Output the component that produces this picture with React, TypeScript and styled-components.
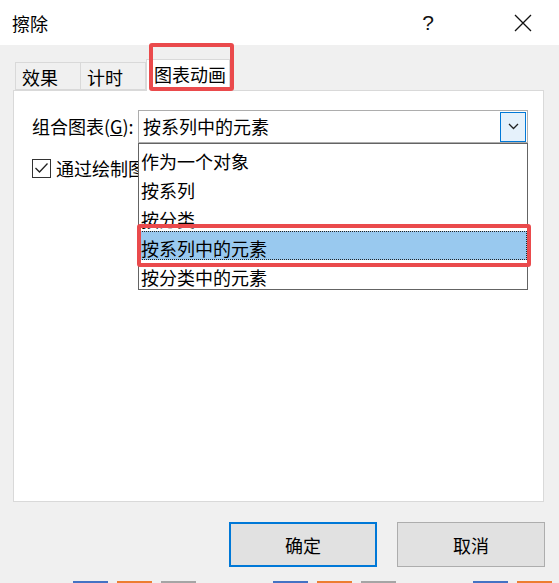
import React from "react"
import styled, { createGlobalStyle } from "styled-components"

const GlobalStyle = createGlobalStyle`
  html, body {
    margin: 0;
    padding: 0;
    background: #f0f0f0;
  }
  body {
    font-family: "Noto Sans CJK SC", "Noto Sans", sans-serif;
    color: #000;
  }
  * {
    box-sizing: border-box;
  }
`

const Window = styled.div`
  width: 559px;
  height: 583px;
  display: flex;
  flex-direction: column;
  background: #f0f0f0;
  overflow: hidden;
`

const TitleBar = styled.div`
  height: 45px;
  flex: none;
  display: flex;
  align-items: center;
  background: #fff;
  padding-left: 12px;
`

const Title = styled.div`
  font-size: 18px;
  line-height: 24px;
  flex: 1;
`

const TitleButton = styled.div<{ $w: number }>`
  width: ${(p) => p.$w}px;
  height: 45px;
  display: flex;
  align-items: center;
  justify-content: center;
  font-size: 20px;
  color: #111;
`

const HelpButton = styled(TitleButton)`
  margin-right: 34px;
  font-family: "Liberation Sans", sans-serif;
  font-size: 21px;
`

const CloseButton = styled(TitleButton)`
  margin-right: 3px;
`

const Body = styled.div`
  padding: 14px 0 0 13px;
  display: flex;
  flex-direction: column;
`

const TabRow = styled.div`
  display: flex;
  align-items: flex-end;
  height: 31px;
  padding-left: 2px;
`

const Tab = styled.div<{ $active?: boolean; $first?: boolean; $w: number }>`
  position: relative;
  width: ${(p) => p.$w}px;
  height: ${(p) => (p.$active ? 32 : 28)}px;
  margin-bottom: ${(p) => (p.$active ? -1 : 0)}px;
  padding-left: ${(p) => (p.$active ? 7 : 6)}px;
  font-size: 18px;
  line-height: 28px;
  background: ${(p) => (p.$active ? "#fff" : "#f0f0f0")};
  border: 1px solid #d9d9d9;
  border-bottom: ${(p) => (p.$active ? "none" : "1px solid #d9d9d9")};
  border-left: ${(p) => (p.$first || p.$active ? "1px solid #d9d9d9" : "none")};
  z-index: ${(p) => (p.$active ? 2 : 1)};
`

const Highlight = styled.div<{ $l: number; $t: number; $w: number; $h: number }>`
  position: absolute;
  left: ${(p) => p.$l}px;
  top: ${(p) => p.$t}px;
  width: ${(p) => p.$w}px;
  height: ${(p) => p.$h}px;
  border: 4px solid #ea4a4c;
  border-radius: 3px;
  pointer-events: none;
  z-index: 5;
`

const Panel = styled.div`
  width: 531px;
  height: 412px;
  background: #fff;
  border: 1px solid #d9d9d9;
  padding: 19px 0 0 18px;
  display: flex;
  flex-direction: column;
`

const FieldRow = styled.div`
  display: flex;
  align-items: center;
`

const Label = styled.div`
  width: 106px;
  font-size: 18px;
  line-height: 33px;
`

const Combo = styled.div`
  position: relative;
  width: 390px;
  height: 33px;
  border: 1px solid #adadad;
  background: #fff;
  display: flex;
  align-items: center;
  padding-left: 4px;
`

const ComboText = styled.div`
  flex: 1;
  font-size: 18px;
  line-height: 31px;
`

const DropButton = styled.div`
  width: 26px;
  height: 30px;
  margin-right: 1px;
  border: 1px solid #0078d7;
  background: #e5f1fb;
  display: flex;
  align-items: center;
  justify-content: center;
`

const List = styled.div`
  position: absolute;
  left: -1px;
  top: 32px;
  width: 390px;
  border: 1px solid #646464;
  background: #fff;
  z-index: 3;
`

const Item = styled.div<{ $selected?: boolean }>`
  position: relative;
  height: 29px;
  padding: 5px 0 0 2px;
  font-size: 18px;
  line-height: 24px;
  white-space: nowrap;
  background: ${(p) => (p.$selected ? "#99c9ef" : "#fff")};
  outline: ${(p) => (p.$selected ? "1px dotted #222" : "none")};
  outline-offset: -1px;
`

const CheckRow = styled.div`
  display: flex;
  align-items: center;
  margin-top: 14px;
  gap: 5px;
`

const Box = styled.div`
  width: 19px;
  height: 19px;
  border: 1px solid #333;
  display: flex;
  align-items: center;
  justify-content: center;
  background: #fff;
`

const CheckText = styled.div`
  font-size: 18px;
  line-height: 22px;
  white-space: nowrap;
`

const Footer = styled.div`
  display: flex;
  justify-content: flex-end;
  gap: 20px;
  margin-top: 20px;
  padding-right: 14px;
`

const Button = styled.div<{ $primary?: boolean }>`
  width: 148px;
  height: 45px;
  display: flex;
  align-items: center;
  justify-content: center;
  font-size: 18px;
  background: #e1e1e1;
  border: ${(p) => (p.$primary ? "2px solid #0078d7" : "1px solid #adadad")};
`

const BarStrip = styled.div`
  display: flex;
  gap: 77px;
  margin-top: 14px;
  padding-left: 73px;
  height: 3px;
`

const BarGroup = styled.div`
  display: flex;
  gap: 9px;
`

const Bar = styled.div<{ $c: string }>`
  width: 35px;
  height: 3px;
  background: ${(p) => p.$c};
`

const items = ["作为一个对象", "按系列", "按分类", "按系列中的元素", "按分类中的元素"]
const barColors = ["#4472c4", "#ed7d31", "#a5a5a5"]

export default function App() {
  return (
    <Window>
      <GlobalStyle />
      <TitleBar>
        <Title>擦除</Title>
        <HelpButton $w={56}>?</HelpButton>
        <CloseButton $w={66}>
          <svg width="18" height="18" viewBox="0 0 18 18">
            <path d="M1 1 L17 17 M17 1 L1 17" stroke="#111" strokeWidth="1.3" fill="none" />
          </svg>
        </CloseButton>
      </TitleBar>
      <Body>
        <TabRow>
          <Tab $w={66} $first>效果</Tab>
          <Tab $w={65}>计时</Tab>
          <Tab $w={84} $active>
            图表动画
            <Highlight $l={2} $t={-17} $w={85} $h={48} />
          </Tab>
        </TabRow>
        <Panel>
          <FieldRow>
            <Label>
              组合图表(<u>G</u>):
            </Label>
            <Combo>
              <ComboText>按系列中的元素</ComboText>
              <DropButton>
                <svg width="11" height="7" viewBox="0 0 11 7">
                  <path d="M1 1 L5.5 5.5 L10 1" stroke="#222" strokeWidth="1.3" fill="none" />
                </svg>
              </DropButton>
              <List>
                {items.map((t, i) => (
                  <Item key={t} $selected={i === 3}>
                    {t}
                    {i === 3 && <Highlight $l={-2} $t={-7} $w={394} $h={43} />}
                  </Item>
                ))}
              </List>
            </Combo>
          </FieldRow>
          <CheckRow>
            <Box>
              <svg width="15" height="12" viewBox="0 0 15 12">
                <path d="M1.5 6 L5.5 10 L13.5 1.5" stroke="#222" strokeWidth="1.3" fill="none" />
              </svg>
            </Box>
            <CheckText>通过绘制图表背景启动动画效果</CheckText>
          </CheckRow>
        </Panel>
      </Body>
      <Footer>
        <Button $primary>确定</Button>
        <Button>取消</Button>
      </Footer>
      <BarStrip>
        {[0, 1, 2].map((g) => (
          <BarGroup key={g}>
            {barColors.slice(0, g === 2 ? 2 : 3).map((c) => (
              <Bar key={c} $c={c} />
            ))}
          </BarGroup>
        ))}
      </BarStrip>
    </Window>
  )
}
